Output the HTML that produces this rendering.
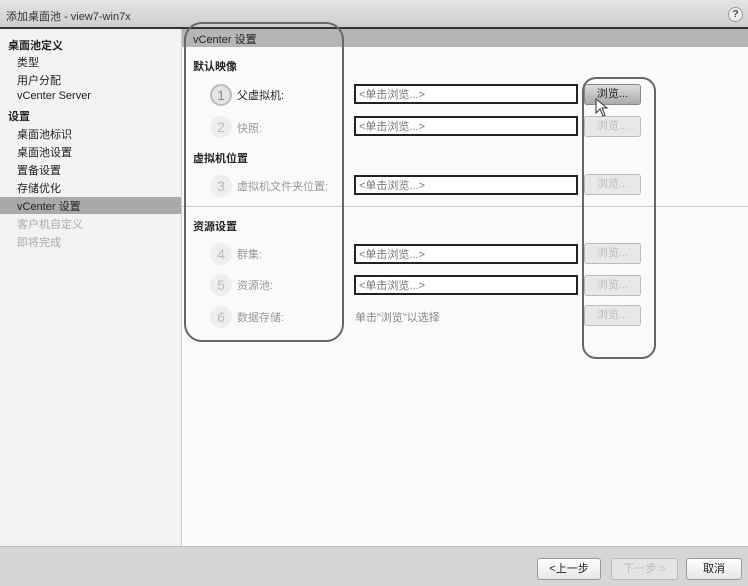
<!DOCTYPE html>
<html><head><meta charset="utf-8"><style>
*{margin:0;padding:0;box-sizing:border-box}
body{width:748px;height:586px;position:relative;overflow:hidden;background:#fafafa;font-family:"Liberation Sans","Noto Sans CJK SC",sans-serif;font-size:11px;color:#222}
.a{position:absolute}
.title{left:0;top:0;width:748px;height:29px;background:linear-gradient(#e4e4e4,#cfcfcf);border-bottom:2px solid #333}
.side{left:0;top:29px;width:182px;height:517px;background:#f2f2f2;border-right:1px solid #ccc}
.si{position:absolute;left:17px;font-size:11px;color:#222;white-space:nowrap}
.sh{left:8px;font-weight:bold}
.dis{color:#aaa}
.hdr{left:182px;top:29px;width:566px;height:18px;background:#b5b5b5}
.inp{position:absolute;left:354px;width:224px;height:20px;border:2px solid #222;background:#fff;color:#777;font-size:11px;padding:2px 3px;line-height:14px}
.btn{position:absolute;left:584px;width:57px;height:21px;border:1px solid #bbb;border-radius:3px;background:#e8e8e8;color:#bbb;font-size:11px;text-align:center;line-height:19px}
.num{position:absolute;left:210px;width:22px;height:22px;border-radius:50%;background:#eee;color:#bbb;font-size:14px;text-align:center;line-height:22px}
.lab{position:absolute;left:237px;color:#999;font-size:11px}
.sec{position:absolute;left:193px;font-weight:bold;font-size:11px}
.bottom{left:0;top:546px;width:748px;height:40px;background:#d6d6d6;border-top:1px solid #bbb}
.bb{position:absolute;top:558px;height:22px;border:1px solid #999;border-radius:3px;background:linear-gradient(#fff,#e6e6e6);text-align:center;line-height:20px;font-size:11px}
.ring{position:absolute;border:2.5px solid #666;border-radius:18px}
</style></head><body>
<div class="a title"><span class="a" style="left:6px;top:8px;font-size:11px;color:#333">添加桌面池 - view7-win7x</span>
<div class="a" style="left:728px;top:7px;width:15px;height:15px;border-radius:50%;border:1px solid #999;background:#eee;font-size:10px;text-align:center;line-height:13px;color:#444;font-weight:bold">?</div></div>
<div class="a side">
<div class="si sh" style="top:8px">桌面池定义</div>
<div class="si" style="top:25px">类型</div>
<div class="si" style="top:43px">用户分配</div>
<div class="si" style="top:61px">vCenter Server</div>
<div class="si sh" style="top:79px">设置</div>
<div class="si" style="top:97px">桌面池标识</div>
<div class="si" style="top:115px">桌面池设置</div>
<div class="si" style="top:133px">置备设置</div>
<div class="si" style="top:151px">存储优化</div>
<div class="a" style="left:0;top:168px;width:181px;height:17px;background:#a9a9a9"></div>
<div class="si" style="top:169px">vCenter 设置</div>
<div class="si dis" style="top:187px">客户机自定义</div>
<div class="si dis" style="top:205px">即将完成</div>
</div>
<div class="a hdr"><span class="a" style="left:11px;top:2px;color:#222">vCenter 设置</span></div>
<div class="sec" style="top:58px">默认映像</div>
<div class="num" style="top:84px;background:#e4e4e4;border:2px solid #bbb;color:#888;line-height:18px">1</div>
<div class="lab" style="top:87px;color:#222">父虚拟机:</div>
<div class="num" style="top:116px">2</div><div class="lab" style="top:120px">快照:</div>
<div class="sec" style="top:150px">虚拟机位置</div>
<div class="num" style="top:175px">3</div><div class="lab" style="top:178px">虚拟机文件夹位置:</div>
<div class="a" style="left:182px;top:206px;width:566px;height:1px;background:#ccc"></div>
<div class="sec" style="top:218px">资源设置</div>
<div class="num" style="top:243px">4</div><div class="lab" style="top:246px">群集:</div>
<div class="num" style="top:274px">5</div><div class="lab" style="top:277px">资源池:</div>
<div class="num" style="top:306px">6</div><div class="lab" style="top:309px">数据存储:</div>
<div class="inp" style="top:84px">&lt;单击浏览...&gt;</div>
<div class="inp" style="top:116px">&lt;单击浏览...&gt;</div>
<div class="inp" style="top:175px">&lt;单击浏览...&gt;</div>
<div class="inp" style="top:244px">&lt;单击浏览...&gt;</div>
<div class="inp" style="top:275px">&lt;单击浏览...&gt;</div>
<div class="a" style="left:355px;top:309px;color:#888">单击"浏览"以选择</div>
<div class="btn" style="top:84px;background:linear-gradient(#ddd,#aaa);border-color:#888;color:#222">浏览...</div>
<div class="btn" style="top:116px">浏览...</div>
<div class="btn" style="top:174px">浏览...</div>
<div class="btn" style="top:243px">浏览...</div>
<div class="btn" style="top:275px">浏览...</div>
<div class="btn" style="top:305px">浏览...</div>
<svg class="a" style="left:595px;top:98px" width="14" height="20"><path d="M1 1 L1 15 L5 11 L8 18 L10 17 L7 10 L12 10 Z" fill="#fff" stroke="#333" stroke-width="1"/></svg>
<div class="ring" style="left:184px;top:22px;width:160px;height:320px"></div>
<div class="ring" style="left:582px;top:77px;width:74px;height:282px;border-radius:14px"></div>
<div class="a bottom"></div>
<div class="bb" style="left:537px;width:64px">&lt;上一步</div>
<div class="bb" style="left:611px;width:67px;color:#bbb;background:#e4e4e4;border-color:#bbb">下一步 &gt;</div>
<div class="bb" style="left:686px;width:56px">取消</div>
</body></html>
